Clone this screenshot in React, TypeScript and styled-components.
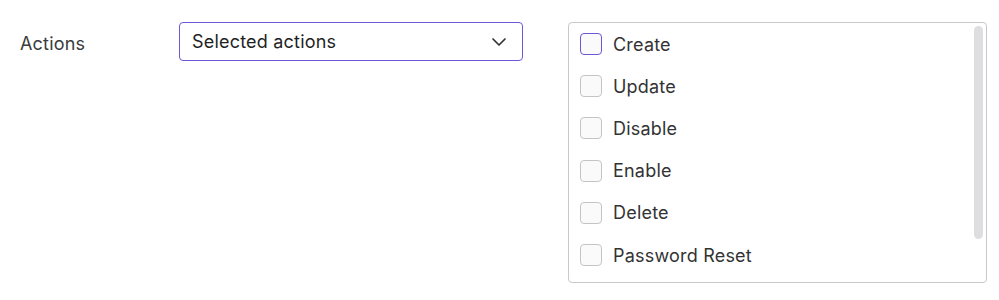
import React, {useState} from 'react'
import styled, {createGlobalStyle} from 'styled-components'
import {ChevronDown} from 'lucide-react'

const GlobalStyle = createGlobalStyle`
  body {
    margin: 0;
    background: #ffffff;
    font-family: Inter, "Noto Sans", sans-serif;
    color: #333333;
  }
`

const FieldRow = styled.div`
  display: flex;
  align-items: flex-start;
  padding: 22px 0 0 20px;
`

const Label = styled.div`
  width: 159px;
  height: 42px;
  display: flex;
  align-items: center;
  font-size: 18px;
  letter-spacing: 0.2px;
  color: #3b3b3b;
`

const SelectBox = styled.div`
  width: 344px;
  height: 39px;
  box-sizing: border-box;
  display: flex;
  align-items: center;
  justify-content: space-between;
  padding: 0 11px 0 12px;
  border: 1px solid #6b58d8;
  border-radius: 4px;
  font-size: 18px;
  letter-spacing: 0.2px;
  color: #1f1f1f;
  cursor: pointer;
`

const ListBox = styled.div`
  position: relative;
  margin-left: 45px;
  width: 419px;
  height: 261px;
  box-sizing: border-box;
  border: 1px solid #c9c9cc;
  border-radius: 4px;
  overflow: hidden;
`

const ScrollThumb = styled.div`
  position: absolute;
  top: 3px;
  right: 3px;
  width: 9px;
  height: 213px;
  border-radius: 5px;
  background: #dedee1;
`

const Option = styled.label`
  display: flex;
  align-items: center;
  gap: 11px;
  height: 42.2px;
  padding-left: 11px;
  font-size: 18px;
  letter-spacing: 0.2px;
  color: #333333;
  cursor: pointer;
`

const Box = styled.span<{ focused?: boolean }>`
  width: 22px;
  height: 22px;
  box-sizing: border-box;
  border: ${({focused}) => (focused ? '1.5px solid #6b58d8' : '1px solid #c4c4c7')};
  border-radius: 4px;
  background: #fafafa;
`

const actions = ['Create', 'Update', 'Disable', 'Enable', 'Delete', 'Password Reset']

export default function App() {
  const [focused] = useState('Create')

  return (
    <>
      <GlobalStyle/>
      <FieldRow>
        <Label>Actions</Label>
        <SelectBox>
          <span>Selected actions</span>
          <ChevronDown size={24} strokeWidth={1.7} color="#333333"/>
        </SelectBox>
        <ListBox>
          {actions.map(a => (
            <Option key={a}>
              <Box focused={a === focused}/>
              {a}
            </Option>
          ))}
          <ScrollThumb/>
        </ListBox>
      </FieldRow>
    </>
  )
}
